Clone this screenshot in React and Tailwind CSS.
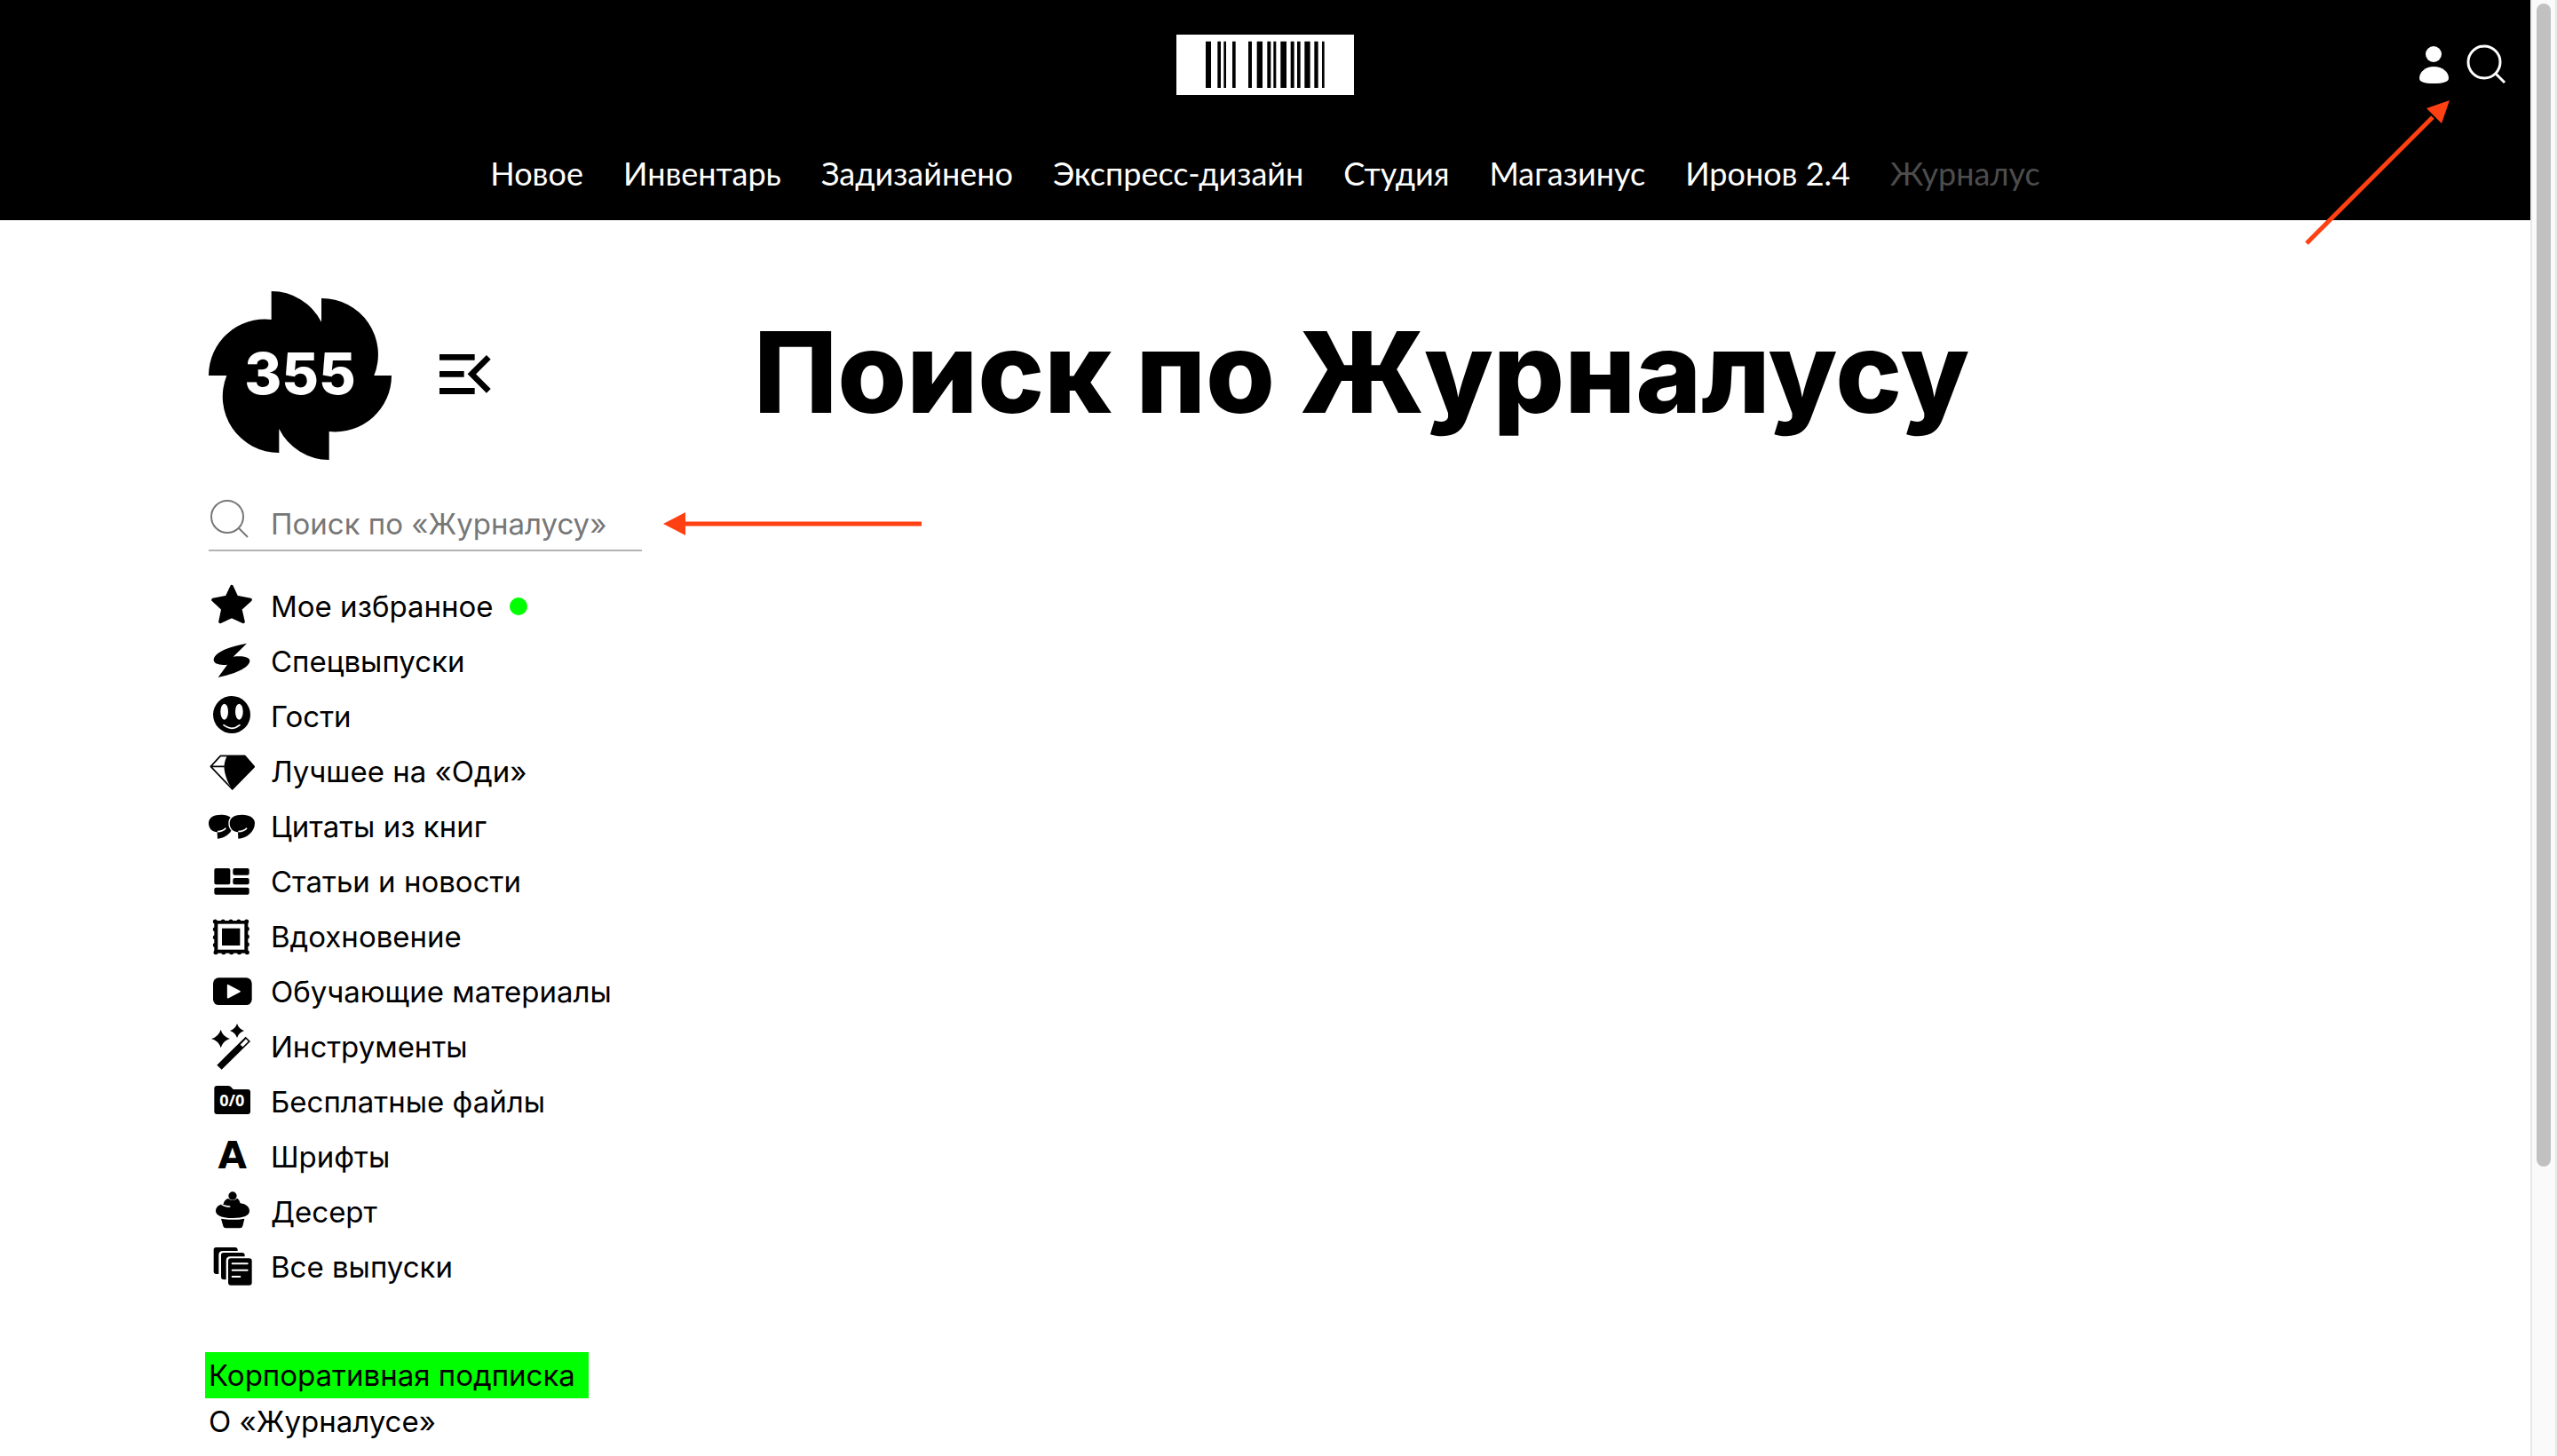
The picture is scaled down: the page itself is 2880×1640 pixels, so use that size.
const navLinks = ["Новое", "Инвентарь", "Задизайнено", "Экспресс-дизайн", "Студия", "Магазинус", "Иронов 2.4"];

// x and width of every bar, in thirds of a pixel
const bars = [
      [174, 18], [214, 11], [235, 8], [264, 11], [318, 12], [347, 19], [382, 12], [403, 9],
      [427, 20], [461, 12], [483, 11], [508, 19], [541, 13], [567, 8],
];

const menu = [
      {
            name: "Мое избранное", isNew: true, box: "45 33 156 186",
            icon: <path d="M123 59l17 36 46 9-34 31 10 43-39-18-39 18 9-43-33-31 46-9z" stroke="currentColor" strokeWidth="11" strokeLinejoin="round" />,
      },
      {
            name: "Спецвыпуски", box: "45 220 156 186",
            icon: <path d="M174 252C125 260 62 281 62 308c0 14 22 19 46 16l-31 43c45-8 107-31 107-56 0-14-28-18-56-14z" />,
      },
      {
            name: "Гости", box: "45 406 156 186",
            icon: <>
                  <circle cx="123" cy="493" r="63" />
                  <ellipse cx="98" cy="483" rx="13" ry="27" fill="#fff" />
                  <ellipse cx="148" cy="483" rx="13" ry="27" fill="#fff" />
                  <path d="M96 528q27 22 54 0" fill="none" stroke="#fff" strokeWidth="5" strokeLinecap="round" />
            </>,
      },
      {
            name: "Лучшее на «Оди»", box: "45 593 156 186",
            icon: <>
                  <path d="M85 633h82l32 37-74 76-73-77zM52 669h46" fill="none" stroke="currentColor" strokeWidth="5" strokeLinejoin="round" />
                  <path d="M108 633h59l32 37-74 76c-14-18-26-46-28-77 2-15 5-26 11-36z" />
            </>,
      },
      {
            name: "Цитаты из книг", box: "45 780 156 186",
            icon: <>
                  <path d="M45 862c0-20 18-29 41-29 26 0 43 11 43 28 0 31-28 52-54 53l-1-22c-15-1-29-10-29-30z" />
                  <path d="M75 890q19-1 28-12" fill="none" stroke="#fff" strokeWidth="5" />
                  <path d="M116 862c0-20 18-29 42-29 26 0 43 11 43 28 0 31-29 52-56 53l-1-22c-14-1-28-10-28-30z" stroke="#fff" strokeWidth="8" paintOrder="stroke" />
                  <path d="M145 890q20-1 29-12" fill="none" stroke="#fff" strokeWidth="5" />
            </>,
      },
      {
            name: "Статьи и новости", box: "45 37 156 186",
            icon: <>
                  <rect x="64" y="85" width="54" height="55" rx="6" />
                  <rect x="127" y="85" width="55" height="23" rx="6" />
                  <rect x="127" y="118" width="55" height="22" rx="6" />
                  <rect x="64" y="150" width="118" height="24" rx="6" />
            </>,
      },
      {
            name: "Вдохновение", box: "45 223 156 186",
            icon: <>
                  <rect x="64" y="262" width="114" height="110" />
                  <rect x="67" y="265" width="108" height="104" fill="none" stroke="currentColor" strokeWidth="15" strokeLinecap="round" strokeDasharray="0 1" pathLength="16" />
                  <rect x="76" y="273" width="90" height="87" fill="#fff" />
                  <rect x="90" y="288" width="61" height="58" />
            </>,
      },
      {
            name: "Обучающие материалы", box: "45 410 156 186",
            icon: <>
                  <rect x="60" y="456" width="131" height="92" rx="19" />
                  <path d="M110 481l40 21-40 21z" fill="#fff" stroke="#fff" strokeWidth="5" strokeLinejoin="round" />
            </>,
      },
      {
            name: "Инструменты", box: "45 597 156 186",
            icon: <>
                  <path d="M86 632q7 24 31 31-24 7-31 31-7-24-32-31 25-7 32-31zM141 612q6 18 24 24-18 6-24 24-6-18-24-24 18-6 24-24zM73 752l16 15 97-95-16-16z" />
                  <path d="M171 664l8 8-19 19-8-8z" fill="#fff" />
            </>,
      },
      {
            name: "Бесплатные файлы", box: "45 4 156 186",
            icon: <>
                  <path d="M73 43h39q6 0 10 5l6 7h49q9 0 9 9v66q0 9-9 9H73q-9 0-9-9V52q0-9 9-9z" />
                  <text x="124" y="111" textAnchor="middle" fontSize="54" fontWeight="700" fill="#fff" className="font-['Noto_Sans',sans-serif]">0/0</text>
            </>,
      },
      {
            name: "Шрифты", box: "45 190 156 186",
            icon: <text x="125" y="323" textAnchor="middle" fontSize="126" fontWeight="700" className="font-['DejaVu_Sans',sans-serif]">A</text>,
      },
      {
            name: "Десерт", box: "45 377 156 186",
            icon: <>
                  <path d="M95 443c2-12 10-16 16-18q15 12 31-1 8 6 10 17c20 2 31 13 31 26 0 16-20 24-57 24s-57-9-57-24c0-13 11-22 26-24zM87 493q39 7 79 0l-6 25q-2 7-9 7h-48q-7 0-9-7z" />
                  <path d="M88 444q14 9 30 8" fill="none" stroke="#fff" strokeWidth="5" />
                  <circle cx="126" cy="416" r="14" />
            </>,
      },
      {
            name: "Все выпуски", box: "45 564 156 186",
            icon: <>
                  <path d="M70 591h64q9 0 9 9v3H93q-14 0-14 14v64h-8q-9 0-9-9v-73q0-8 8-8zM95 609h63q9 0 9 9v4h-49q-14 0-14 14v64h-8q-9 0-9-9v-74q0-8 8-8z" />
                  <rect x="111" y="628" width="80" height="91" rx="9" />
                  <path d="M125 646h51M125 668h51M125 690h26" stroke="#fff" strokeWidth="6" strokeLinecap="round" />
            </>,
      },
];

function SearchIcon({ className, strokeWidth }){
      return (
            <svg viewBox="0 0 46 46" fill="none" stroke="currentColor" strokeWidth={strokeWidth} className={className} aria-hidden="true">
                  <circle cx="21" cy="20" r="18" />
                  <path d="M34 33l10 10" />
            </svg>
      );
}

function Header(){
      return (
            <header className="bg-black text-white h-[248px] pt-[39px]">
                  <div className="grid grid-cols-[1fr_auto_1fr] items-center">
                        <a href="#" aria-label="Студия" className="col-start-2 bg-white">
                              <svg viewBox="75 57 600 204" className="w-[200px] h-[68px]" aria-hidden="true">
                                    {bars.map(([x, width]) => <rect key={x} x={x} y="80" width={width} height="157" />)}
                              </svg>
                        </a>
                        <div className="flex justify-end items-center gap-[18px] pr-[27px]">
                              <button type="button" aria-label="Войти">
                                    <svg viewBox="0 0 35 44" fill="currentColor" className="w-[35px] h-11" aria-hidden="true">
                                          <circle cx="17" cy="10" r="9" />
                                          <path d="M17 24c10 0 17 6 17 13 0 4-6 6-17 6S1 41 1 37c0-7 7-13 16-13z" />
                                    </svg>
                              </button>
                              <button type="button" aria-label="Поиск">
                                    <SearchIcon strokeWidth="3" className="w-[46px] h-[46px]" />
                              </button>
                        </div>
                  </div>
                  <nav className="mt-[66px] flex justify-center gap-[45px] font-['Lato',sans-serif] text-[36px] leading-[44px] whitespace-nowrap">
                        {navLinks.map(link => <a key={link} href="#">{link}</a>)}
                        <a href="#" aria-current="page" className="text-[#4d4d4d]">Журналус</a>
                  </nav>
            </header>
      );
}

function Sidebar(){
      return (
            <aside className="w-[488px] shrink-0 pt-20">
                  <div className="flex items-center gap-[54px]">
                        <a href="#" className="grid place-items-center">
                              <svg viewBox="45 54 618 570" className="col-start-1 row-start-1 w-[206px] h-[190px]" aria-hidden="true">
                                    <path d="M257 54A190 190 0 0 1 426 158V78A190 190 0 0 1 604 339H663A190 190 0 0 1 452 528V624A190 190 0 0 1 283 519V600A190 190 0 0 1 106 339H45A190 190 0 0 1 257 150Z" />
                              </svg>
                              <span className="col-start-1 row-start-1 pb-1 text-white text-[64px] leading-[64px] font-extrabold">355</span>
                        </a>
                        <button type="button" aria-label="Свернуть меню" className="pb-1">
                              <svg viewBox="825 264 174 135" className="w-[58px] h-[45px]" aria-hidden="true">
                                    <path d="M825 264h119v20H825zM825 321h83v20h-83zM825 378h119v21H825z" />
                                    <path d="M991 274l-57 57 57 57" fill="none" stroke="currentColor" strokeWidth="20" />
                              </svg>
                        </button>
                  </div>

                  <form role="search" className="mt-11 flex items-start gap-6 border-b-2 border-[#b3b3b3] text-[#777]">
                        <SearchIcon strokeWidth="2" className="w-[46px] h-[46px] shrink-0" />
                        <input type="search" aria-label="Поиск по «Журналусу»" placeholder="Поиск по «Журналусу»" className="h-[57px] pb-0.5 min-w-0 flex-1 bg-transparent outline-none placeholder:text-[#777] placeholder:opacity-100" />
                  </form>

                  <ul className="mt-[31px]">
                        {menu.map(({ name, isNew, box, icon }) => (
                              <li key={name}>
                                    <a href="#" className="flex items-center gap-[18px] leading-[62px] whitespace-nowrap">
                                          <svg viewBox={box} fill="currentColor" className="w-[52px] h-[62px] shrink-0" aria-hidden="true">{icon}</svg>
                                          {name}
                                          {isNew && <span className="w-5 h-5 rounded-full bg-[#00ff00]" />}
                                    </a>
                              </li>
                        ))}
                  </ul>

                  <div className="mt-[65px] flex flex-col items-start whitespace-nowrap">
                        <a href="#" className="-ml-1 pl-1 pr-[15px] bg-[#00ff00] leading-[52px]">Корпоративная подписка</a>
                        <a href="#" className="leading-[52px]">О «Журналусе»</a>
                  </div>
            </aside>
      );
}

export default function App(){
      return (
            <div className="relative flex min-h-screen bg-white text-black font-['Inter',sans-serif] text-[33px]">
                  <div className="flex-1 min-w-0">
                        <Header />
                        <div className="flex gap-[126px] pl-[235px]">
                              <Sidebar />
                              <main className="flex-1 min-w-0 pt-[107px]">
                                    <h1 className="text-[126px] leading-[128px] font-extrabold">Поиск по Журналусу</h1>
                              </main>
                        </div>
                  </div>

                  {/* Scrollbar */}
                  <div className="w-[30px] shrink-0 bg-[#fafafa] border-l-2 border-r-2 border-[#e8e8e8] flex justify-center items-start pt-1">
                        <div className="w-4 h-[1310px] rounded-full bg-[#c1c1c1]" />
                  </div>

                  {/* Arrows over the page */}
                  <svg viewBox="0 0 164 164" className="absolute top-[112px] right-[120px] w-[164px] h-[164px] text-[#ff4013]" aria-hidden="true">
                        <path d="M2 162L144 20" stroke="currentColor" strokeWidth="5" />
                        <path d="M163 1l-9 26-17-17z" fill="currentColor" />
                  </svg>
                  <svg viewBox="0 0 291 26" className="absolute top-[577px] left-[747px] w-[291px] h-[26px] text-[#ff4013]" aria-hidden="true">
                        <path d="M20 13H291" stroke="currentColor" strokeWidth="5" />
                        <path d="M0 13L25 0v26z" fill="currentColor" />
                  </svg>
            </div>
      );
}
